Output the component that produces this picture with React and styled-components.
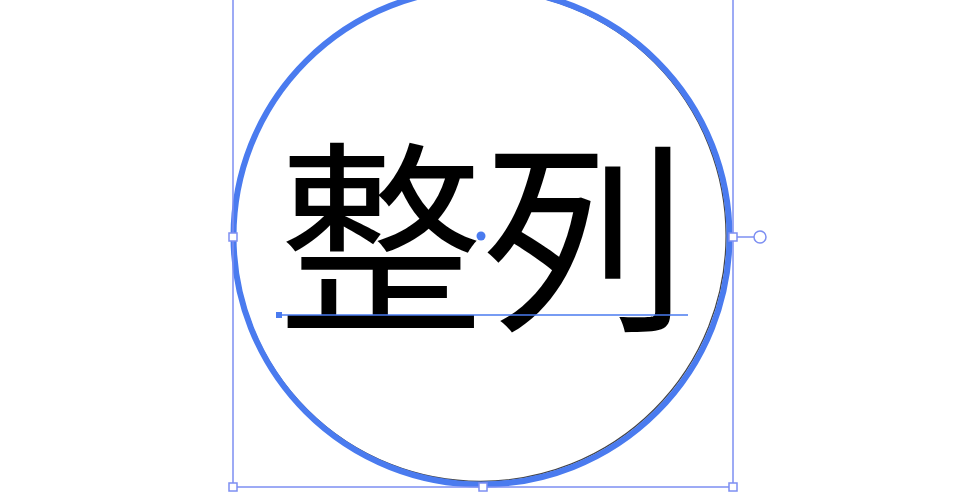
import styled, { createGlobalStyle } from "styled-components";

const GlobalStyle = createGlobalStyle`
  html, body {
    margin: 0;
    padding: 0;
    background: #ffffff;
  }
`;

const Canvas = styled.div`
  position: relative;
  width: 960px;
  height: 500px;
  overflow: hidden;
  background: #ffffff;
`;

const Label = styled.div`
  position: absolute;
  left: ${(p) => p.x}px;
  top: ${(p) => p.y}px;
  font-family: "Noto Sans CJK JP", "Noto Sans CJK SC", sans-serif;
  font-size: ${(p) => p.size}px;
  font-weight: ${(p) => p.weight || 400};
  line-height: 1;
  color: #000000;
  white-space: nowrap;
`;

const Overlay = styled.svg`
  position: absolute;
  left: 0;
  top: 0;
  pointer-events: none;
`;

const SEL = "#4a7bef";
const BOX = "#7d8ff2";

const handles = [
  [233, 237],
  [733, 237],
  [233, 487],
  [483, 487],
  [733, 487],
];

export default function App() {
  return (
    <>
      <GlobalStyle />
      <Canvas>
        <Label x={278} y={123} size={205}>
          整列
        </Label>
        <Overlay width="960" height="500" viewBox="0 0 960 500">
          {/* shape path and its selection highlight */}
          <circle cx="480.5" cy="235.8" r="245.6" fill="none" stroke="#444444" strokeWidth="1.3" />
          <circle cx="481.5" cy="236.5" r="248" fill="none" stroke={SEL} strokeWidth="6" />

          {/* bounding box */}
          <rect x="233" y="-13" width="500" height="500" fill="none" stroke={BOX} strokeWidth="1.5" />
          <line x1="733" y1="237" x2="754" y2="237" stroke={BOX} strokeWidth="1.5" />
          <circle cx="760" cy="237" r="6" fill="#ffffff" stroke={BOX} strokeWidth="1.5" />
          {handles.map(([x, y]) => (
            <rect
              key={`${x}-${y}`}
              x={x - 4}
              y={y - 4}
              width="8"
              height="8"
              fill="#ffffff"
              stroke={BOX}
              strokeWidth="1.5"
            />
          ))}

          {/* text baseline and centre point */}
          <line x1="279" y1="315" x2="688" y2="315" stroke={SEL} strokeWidth="1.5" />
          <rect x="276" y="312" width="6" height="6" fill={SEL} />
          <circle cx="481" cy="236" r="4.5" fill={SEL} />
        </Overlay>
      </Canvas>
    </>
  );
}
